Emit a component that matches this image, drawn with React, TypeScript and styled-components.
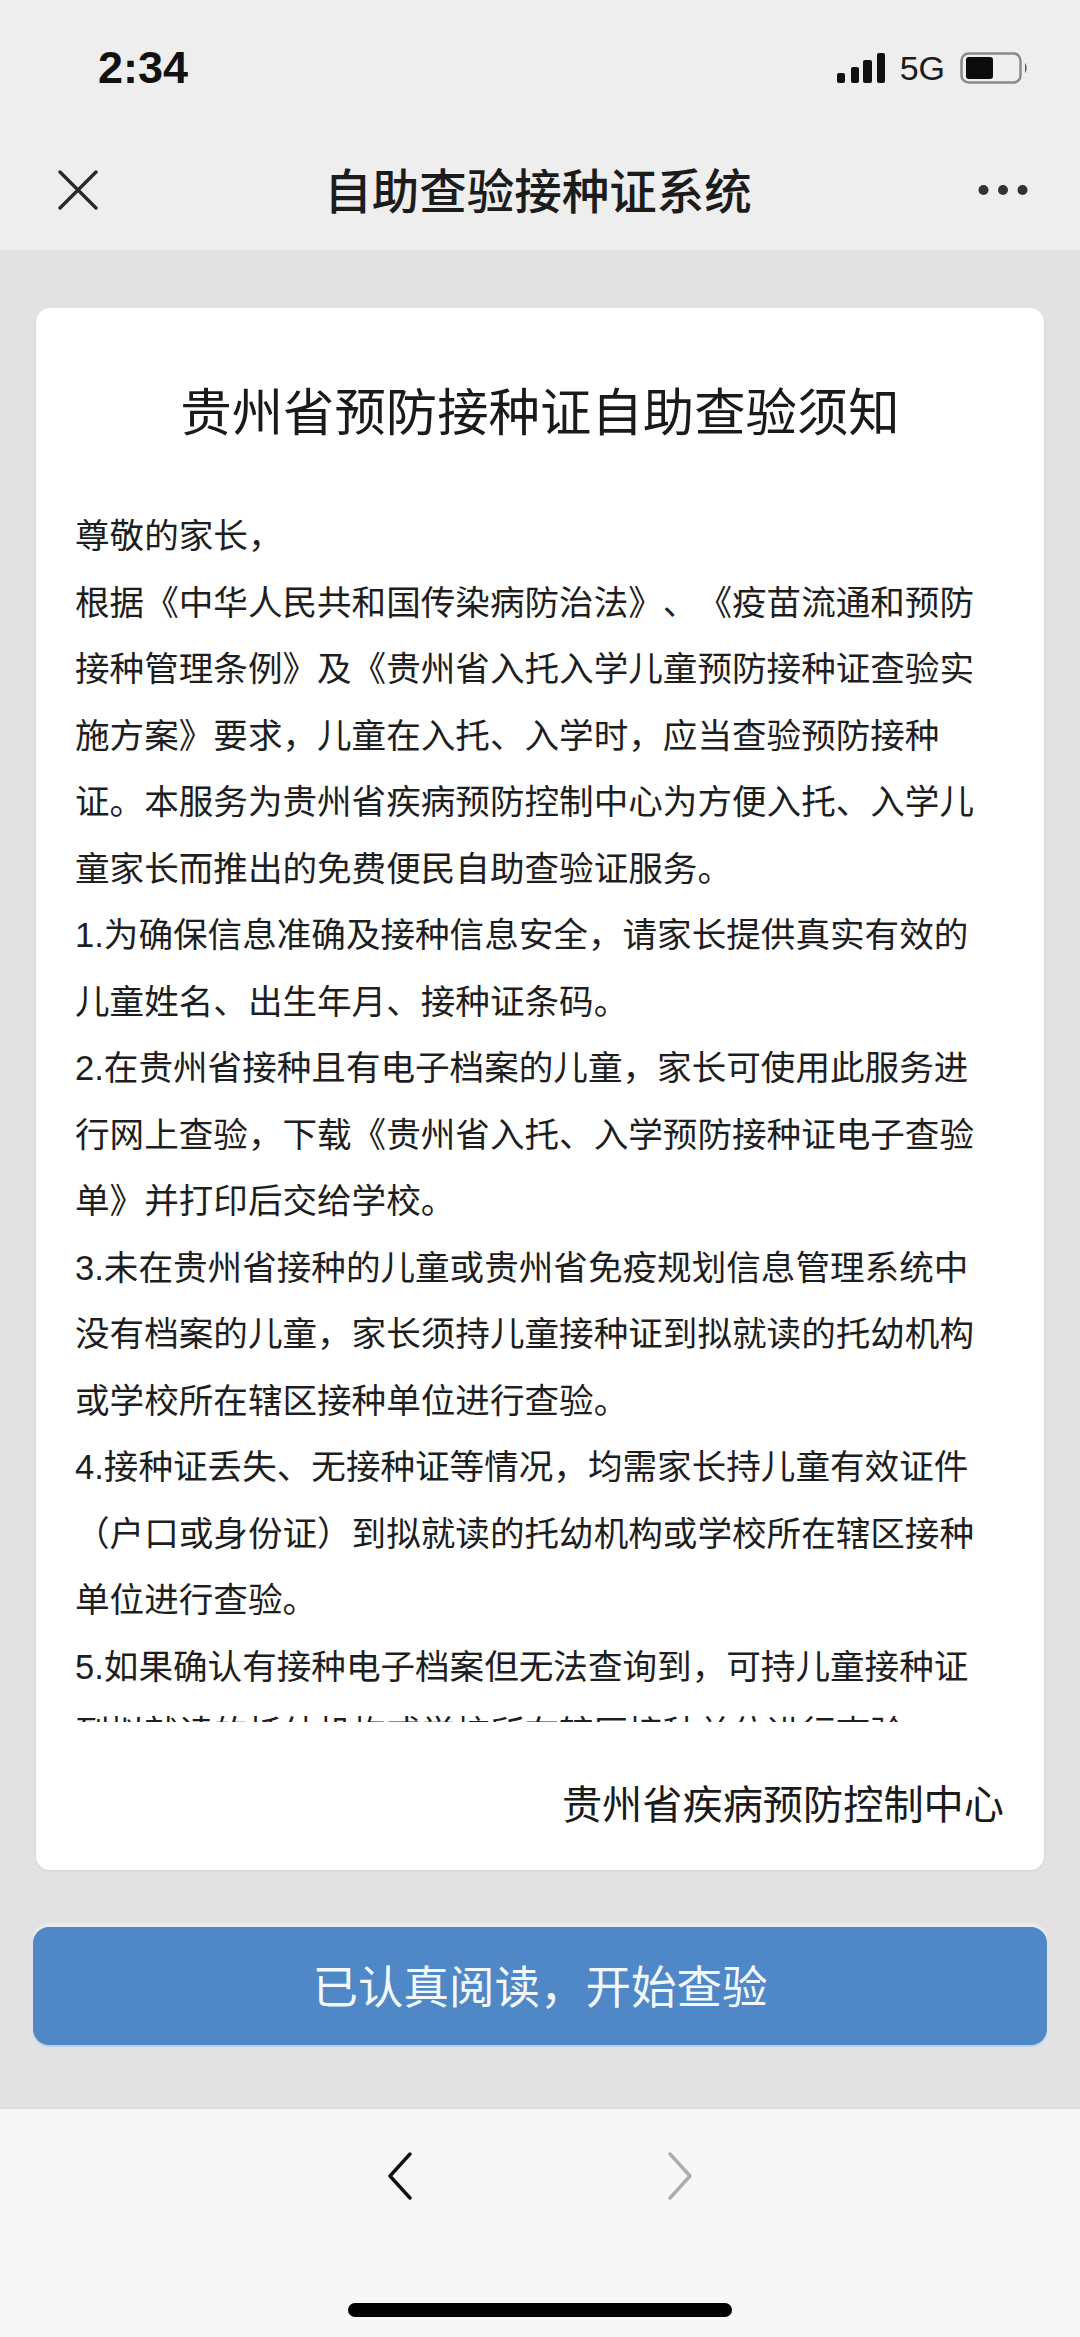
import React from "react"
import styled, { createGlobalStyle } from "styled-components"

const GlobalStyle = createGlobalStyle`
  html, body {
    margin: 0;
    padding: 0;
    background: #e2e2e2;
  }
  * {
    box-sizing: border-box;
  }
`

const Page = styled.div`
  width: 1080px;
  height: 2337px;
  display: flex;
  flex-direction: column;
  overflow: hidden;
  background: #e2e2e2;
  font-family: "Liberation Sans", "Noto Sans CJK SC", sans-serif;
  color: #1c1c1c;
  text-spacing-trim: space-all;
`

const TopBar = styled.header`
  height: 250px;
  flex: none;
  background: #eeeeee;
  display: flex;
  flex-direction: column;
`

const StatusBar = styled.div`
  height: 136px;
  padding: 0 52px 0 98px;
  display: flex;
  align-items: center;
  justify-content: space-between;
`

const Clock = styled.span`
  font-size: 45px;
  font-weight: 700;
  color: #111;
`

const StatusIcons = styled.div`
  display: flex;
  align-items: center;
  gap: 15px;
`

const Network = styled.span`
  font-size: 34px;
  color: #1a1a1a;
`

const NavBar = styled.div`
  height: 114px;
  padding: 0 52px 6px 58px;
  display: flex;
  align-items: center;
  justify-content: space-between;
`

const NavTitle = styled.h1`
  margin: 0 0 4px;
  font-size: 47.5px;
  font-weight: 500;
  color: #1c1c1c;
`

const Content = styled.main`
  flex: 1;
  display: flex;
  flex-direction: column;
  align-items: center;
  padding-top: 58px;
`

const Card = styled.section`
  width: 1008px;
  height: 1562px;
  background: #fff;
  border-radius: 14px;
  box-shadow: 0 1px 3px rgba(0, 0, 0, 0.07);
  display: flex;
  flex-direction: column;
`

const CardTitle = styled.h2`
  margin: 0;
  height: 195px;
  padding-top: 74px;
  text-align: center;
  font-size: 51.4px;
  line-height: 62px;
  font-weight: 400;
  color: #1a1a1a;
`

const Notice = styled.div`
  height: 1219px;
  padding-left: 39px;
  overflow: hidden;
  font-size: 34.6px;
  line-height: 66.5px;
  color: #1e1e1e;
`

const NoticeLine = styled.div`
  white-space: nowrap;
`

const Signature = styled.div`
  margin-top: 54px;
  padding-right: 40px;
  text-align: right;
  font-size: 40.2px;
  line-height: 60px;
  color: #1a1a1a;
`

const StartButton = styled.button`
  width: 1014px;
  height: 118px;
  margin-top: 57px;
  padding: 0 0 4px;
  border: 0;
  border-radius: 16px;
  background: #4f87c7;
  box-shadow: 0 -4px 0 #ececec, 0 2px 0 #b9d0e8;
  color: #f2f8fc;
  font-family: inherit;
  font-size: 45.5px;
`

const BottomBar = styled.footer`
  height: 230px;
  flex: none;
  background: #f7f7f7;
  border-top: 2px solid #dcdcdc;
  display: flex;
  flex-direction: column;
  align-items: center;
`

const HistoryNav = styled.div`
  margin-top: 43px;
  width: 304px;
  display: flex;
  justify-content: space-between;
`

const HomeBar = styled.div`
  width: 384px;
  height: 14px;
  margin-top: 103px;
  border-radius: 7px;
  background: #000;
`

const lines = [
  "尊敬的家长，",
  "根据《中华人民共和国传染病防治法》、《疫苗流通和预防",
  "接种管理条例》及《贵州省入托入学儿童预防接种证查验实",
  "施方案》要求，儿童在入托、入学时，应当查验预防接种",
  "证。本服务为贵州省疾病预防控制中心为方便入托、入学儿",
  "童家长而推出的免费便民自助查验证服务。",
  "1.为确保信息准确及接种信息安全，请家长提供真实有效的",
  "儿童姓名、出生年月、接种证条码。",
  "2.在贵州省接种且有电子档案的儿童，家长可使用此服务进",
  "行网上查验，下载《贵州省入托、入学预防接种证电子查验",
  "单》并打印后交给学校。",
  "3.未在贵州省接种的儿童或贵州省免疫规划信息管理系统中",
  "没有档案的儿童，家长须持儿童接种证到拟就读的托幼机构",
  "或学校所在辖区接种单位进行查验。",
  "4.接种证丢失、无接种证等情况，均需家长持儿童有效证件",
  "（户口或身份证）到拟就读的托幼机构或学校所在辖区接种",
  "单位进行查验。",
  "5.如果确认有接种电子档案但无法查询到，可持儿童接种证",
  "到拟就读的托幼机构或学校所在辖区接种单位进行查验。",
]

function SignalIcon() {
  return (
    <svg width="48" height="30" viewBox="0 0 48 30" fill="#111">
      <rect x="0" y="20" width="8" height="10" rx="2" />
      <rect x="14" y="14" width="8" height="16" rx="2" />
      <rect x="26" y="7" width="9" height="23" rx="2" />
      <rect x="40" y="0" width="8" height="30" rx="2" />
    </svg>
  )
}

function BatteryIcon() {
  return (
    <svg width="68" height="32" viewBox="0 0 68 32">
      <rect x="1.5" y="1.5" width="59" height="29" rx="7" fill="none" stroke="#8a8a8a" strokeWidth="2.5" />
      <rect x="6" y="5" width="27" height="22" rx="3" fill="#0c0c0c" />
      <path d="M65 11 C67 13 67 19 65 21 Z" fill="#555" />
    </svg>
  )
}

function CloseIcon() {
  return (
    <svg width="40" height="40" viewBox="0 0 40 40" stroke="#2a2a2a" strokeWidth="3.4" strokeLinecap="round">
      <path d="M2 2 L38 38 M38 2 L2 38" />
    </svg>
  )
}

function MoreIcon() {
  return (
    <svg width="50" height="12" viewBox="0 0 50 12" fill="#333">
      <circle cx="5.5" cy="6" r="5" />
      <circle cx="25" cy="6" r="5" />
      <circle cx="44.5" cy="6" r="5" />
    </svg>
  )
}

function Chevron({ back }: { back?: boolean }) {
  return (
    <svg width="24" height="48" viewBox="0 0 24 48" fill="none" stroke={back ? "#111" : "#adadad"} strokeWidth="3.4" strokeLinecap="round" strokeLinejoin="round">
      <path d={back ? "M22 2 L2 24 L22 46" : "M2 2 L22 24 L2 46"} />
    </svg>
  )
}

export default function App() {
  return (
    <Page>
      <GlobalStyle />
      <TopBar>
        <StatusBar>
          <Clock>2:34</Clock>
          <StatusIcons>
            <SignalIcon />
            <Network>5G</Network>
            <BatteryIcon />
          </StatusIcons>
        </StatusBar>
        <NavBar>
          <CloseIcon />
          <NavTitle>自助查验接种证系统</NavTitle>
          <MoreIcon />
        </NavBar>
      </TopBar>
      <Content>
        <Card>
          <CardTitle>贵州省预防接种证自助查验须知</CardTitle>
          <Notice>
            {lines.map(line => (
              <NoticeLine key={line}>{line}</NoticeLine>
            ))}
          </Notice>
          <Signature>贵州省疾病预防控制中心</Signature>
        </Card>
        <StartButton>已认真阅读，开始查验</StartButton>
      </Content>
      <BottomBar>
        <HistoryNav>
          <Chevron back />
          <Chevron />
        </HistoryNav>
        <HomeBar />
      </BottomBar>
    </Page>
  )
}
